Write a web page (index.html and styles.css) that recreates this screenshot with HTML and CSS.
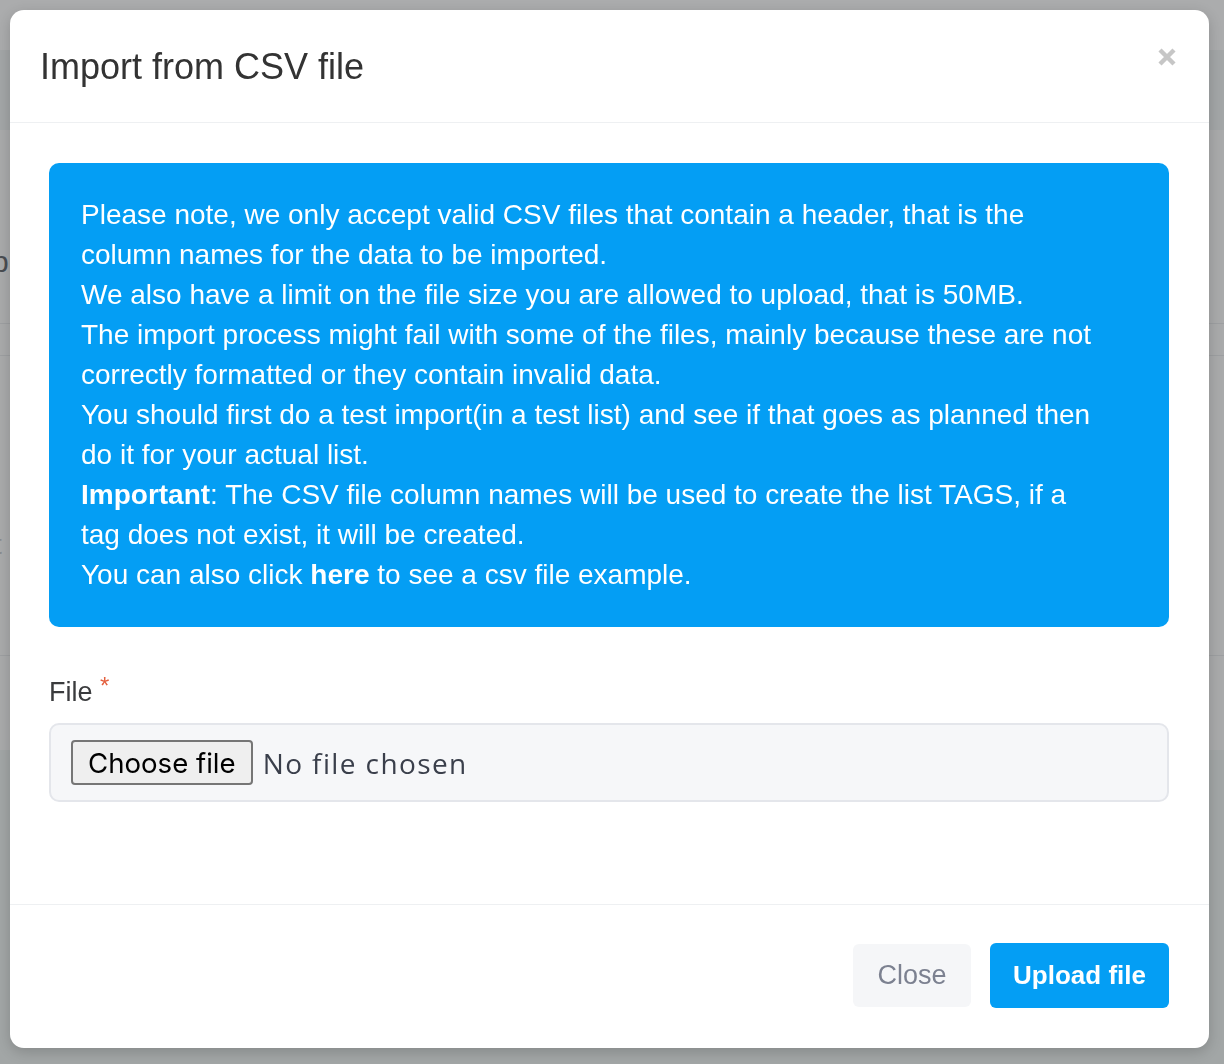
FILE: index.html
```html
<!DOCTYPE html>
<html lang="en">
<head>
<meta charset="utf-8">
<title>Import from CSV file</title>
<link rel="stylesheet" href="styles.css">
</head>
<body>
<div class="page">
  <div class="page-top"></div>
  <div class="page-nav"></div>
  <div class="page-main">
    <div class="page-title">b</div>
    <div class="page-rule first"></div>
    <div class="page-rule second"></div>
    <div class="page-label">t</div>
    <div class="page-rule third"></div>
  </div>
  <div class="page-foot"></div>
</div>

<div class="modal" role="dialog" aria-labelledby="modal-title">
  <div class="modal-header">
    <h4 class="modal-title" id="modal-title">Import from CSV file</h4>
    <button class="modal-close" type="button" aria-label="Close">
      <svg width="18" height="18" viewBox="0 0 18 18" aria-hidden="true">
        <path d="M2 2 L16 16 M16 2 L2 16" stroke="currentColor" stroke-width="4.4" fill="none"/>
      </svg>
    </button>
  </div>
  <div class="modal-body">
    <div class="alert">
      <p>Please note, we only accept valid CSV files that contain a header, that is the<br>column names for the data to be imported.</p>
      <p>We also have a limit on the file size you are allowed to upload, that is 50MB.</p>
      <p>The import process might fail with some of the files, mainly because these are not<br>correctly formatted or they contain invalid data.</p>
      <p>You should first do a test import(in a test list) and see if that goes as planned then<br>do it for your actual list.</p>
      <p><strong>Important</strong>: The CSV file column names will be used to create the list TAGS, if a<br>tag does not exist, it will be created.</p>
      <p>You can also click <a class="alert-link" href="#">here</a> to see a csv file example.</p>
    </div>
    <div class="form-group">
      <label class="form-label">File <span class="required">*</span></label>
      <div class="file-field">
        <button class="file-btn" type="button">Choose file</button>
        <span class="file-name">No file chosen</span>
      </div>
    </div>
  </div>
  <div class="modal-footer">
    <button class="btn btn-light" type="button">Close</button>
    <button class="btn btn-primary" type="button">Upload file</button>
  </div>
</div>
</body>
</html>
```
FILE: styles.css
```css
* { box-sizing: border-box; }

html, body {
  margin: 0;
  padding: 0;
  height: 100%;
}

body {
  font-family: "Liberation Sans", Arial, Helvetica, sans-serif;
  background: #a9aaab;
  overflow: hidden;
}

/* page behind the backdrop */
.page {
  display: flex;
  flex-direction: column;
  height: 1064px;
}
.page-top { height: 50px; background: #abacad; }
.page-nav { height: 80px; background: #a3a6a7; }
.page-main {
  flex: 1;
  background: #a9aaab;
  padding-top: 115px;
  display: flex;
  flex-direction: column;
}
.page-title {
  font-size: 30px;
  color: #4a4d52;
  line-height: 34px;
  margin-left: -8px;
}
.page-rule { height: 1px; background: #9d9fa1; width: 100%; }
.page-rule.first { margin-top: 44px; }
.page-rule.second { margin-top: 31px; }
.page-label {
  font-size: 28px;
  color: #8a8c8e;
  line-height: 30px;
  margin-top: 174px;
  margin-left: -6px;
}
.page-rule.third { margin-top: 95px; }
.page-foot { height: 314px; background: #a2a6a6; }

/* modal */
.modal {
  position: fixed;
  top: 10px;
  left: 10px;
  width: 1199px;
  height: 1038px;
  background: #fff;
  border-radius: 14px;
  box-shadow: 0 4px 14px rgba(0, 0, 0, 0.18);
  display: flex;
  flex-direction: column;
  overflow: hidden;
}

.modal-header {
  height: 113px;
  border-bottom: 1px solid #eef0f2;
  display: flex;
  align-items: center;
  justify-content: space-between;
  padding: 0 33px 0 30px;
}
.modal-title {
  margin: 0;
  font-size: 36px;
  font-weight: 400;
  color: #333;
  line-height: 42px;
  padding-top: 2px;
}
.modal-close {
  border: 0;
  background: none;
  padding: 0;
  width: 18px;
  height: 18px;
  color: #c6c6c6;
  display: flex;
  align-self: flex-start;
  margin-top: 38px;
  cursor: pointer;
}

.modal-body {
  flex: 1;
  padding: 40px 40px 0 39px;
}

.alert {
  background: #049ef4;
  color: #fff;
  border-radius: 10px;
  padding: 32px 32px;
  font-size: 28px;
  line-height: 40px;
}
.alert p { margin: 0; }
.alert strong, .alert-link { font-weight: 700; color: #fff; text-decoration: none; }

.form-group {
  margin-top: 49px;
  display: flex;
  flex-direction: column;
  gap: 15px;
}
.form-label {
  font-size: 27px;
  line-height: 32px;
  color: #3a3b3d;
}
.required {
  color: #e4603f;
  font-size: 24px;
  vertical-align: top;
  line-height: 20px;
}

.file-field {
  height: 79px;
  border: 2px solid #e4e6eb;
  border-radius: 10px;
  background: #f6f7f9;
  display: flex;
  align-items: center;
  padding: 0 20px;
  gap: 10px;
}
.file-btn {
  height: 45px;
  padding: 0 15px;
  font-family: Inter, "Liberation Sans", sans-serif;
  font-size: 27.6px;
  color: #000;
  background: #efefef;
  border: 2px solid #767676;
  border-radius: 4px;
}
.file-name {
  font-family: "Open Sans", sans-serif;
  font-size: 28px;
  color: #3a3f4b;
  letter-spacing: 1.4px;
}

.modal-footer {
  border-top: 1px solid #eef0f2;
  padding: 38px 40px 40px;
  display: flex;
  justify-content: flex-end;
  align-items: center;
  gap: 19px;
}
.btn {
  font-family: "Liberation Sans", Arial, sans-serif;
  font-size: 27px;
  border: 0;
  border-radius: 6px;
  cursor: pointer;
}
.btn-light {
  width: 118px;
  height: 63px;
  background: #f5f6f8;
  color: #7c8190;
}
.btn-primary {
  width: 179px;
  height: 65px;
  background: #049ef4;
  color: #fff;
  font-weight: 700;
  font-size: 26px;
}
```
